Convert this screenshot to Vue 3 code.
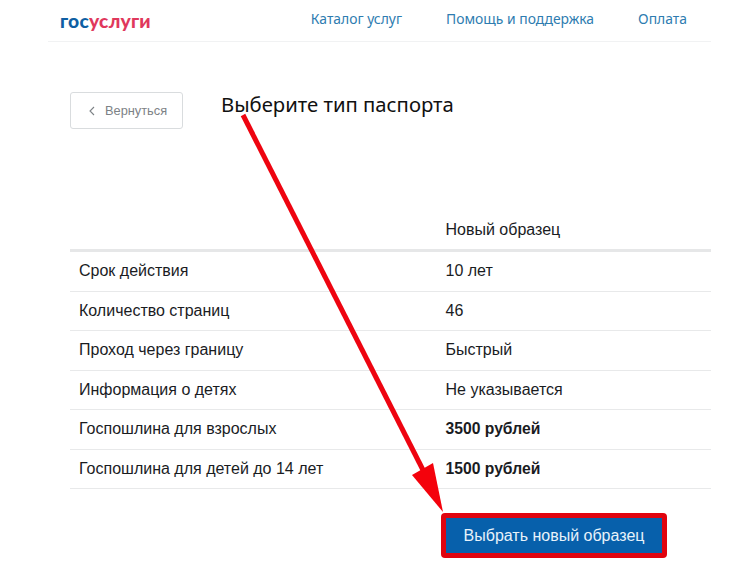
<template>
  <div class="page">
    <header class="top">
      <div class="logo"><span class="logo-blue">гос</span><span class="logo-red">услуги</span></div>
      <nav class="nav">
        <a v-for="link in links" :key="link" class="nav-link">{{ link }}</a>
      </nav>
    </header>

    <div class="title-row">
      <button class="back">
        <svg width="6" height="10" viewBox="0 0 6 10" class="back-icon">
          <path d="M5 1 L1 5 L5 9" fill="none" stroke="#7d8286" stroke-width="1.1" />
        </svg>
        Вернуться
      </button>
      <h1 class="title">Выберите тип паспорта</h1>
    </div>

    <div class="table">
      <div class="row head">
        <div class="cell-left"></div>
        <div class="cell-right">Новый образец</div>
      </div>
      <div v-for="row in rows" :key="row.label" class="row">
        <div class="cell-left">{{ row.label }}</div>
        <div class="cell-right" :class="{ bold: row.bold }">{{ row.value }}</div>
      </div>
    </div>

    <div class="actions">
      <div class="frame">
        <button class="choose">Выбрать новый образец</button>
      </div>
    </div>

    <!-- red annotation arrow over the page -->
    <svg class="arrow" width="749" height="570" viewBox="0 0 749 570">
      <line x1="243" y1="115" x2="423" y2="470" stroke="#ee0410" stroke-width="5" />
      <polygon points="443,512 412,475 433,463" fill="#f4020c" />
    </svg>
  </div>
</template>

<script setup>
const links = ['Каталог услуг', 'Помощь и поддержка', 'Оплата']

const rows = [
  { label: 'Срок действия', value: '10 лет' },
  { label: 'Количество страниц', value: '46' },
  { label: 'Проход через границу', value: 'Быстрый' },
  { label: 'Информация о детях', value: 'Не указывается' },
  { label: 'Госпошлина для взрослых', value: '3500 рублей', bold: true },
  { label: 'Госпошлина для детей до 14 лет', value: '1500 рублей', bold: true }
]
</script>

<style>
body {
  background: #fff;
  overflow: hidden;
}
</style>

<style scoped>
.page {
  position: relative;
  width: 749px;
  height: 570px;
  overflow: hidden;
  background: #fff;
  color: #1a1c1f;
  font-family: "Liberation Sans", Arial, sans-serif;
}

.top {
  display: flex;
  justify-content: space-between;
  align-items: center;
  height: 42px;
  margin: 0 38px 0 48px;
  padding: 0 24px 0 12px;
  border-bottom: 1px solid #f1f2f3;
  box-sizing: border-box;
}

.logo {
  font-family: Lato, "Liberation Sans", sans-serif;
  font-size: 19.3px;
  font-weight: 900;
  letter-spacing: 0.2px;
}

.logo-blue {
  color: #0f5fa3;
}

.logo-red {
  color: #e0385c;
}

.nav {
  display: flex;
  gap: 44px;
  margin-top: -4px;
}

.nav-link {
  color: #2e7cb0;
  font-size: 13.9px;
  font-family: "Noto Sans", sans-serif;
}

.title-row {
  display: flex;
  align-items: flex-start;
  margin: 50px 0 0 70px;
  height: 123px;
}

.back {
  display: flex;
  align-items: center;
  gap: 10px;
  width: 113px;
  height: 37px;
  padding: 0 0 0 18px;
  border: 1px solid #d9dcde;
  border-radius: 3px;
  background: #fff;
  color: #7d8286;
  font-family: "Liberation Sans", Arial, sans-serif;
  font-size: 12.8px;
  box-sizing: border-box;
}

.title {
  margin: -1px 0 0 38px;
  font-size: 20.3px;
  font-weight: 400;
  line-height: 26px;
  color: #111;
  font-family: "Noto Sans", sans-serif;
}

.table {
  margin: 0 38px 0 70px;
  font-size: 16px;
}

.row {
  display: grid;
  grid-template-columns: 366.5px 1fr;
  align-items: center;
  height: 39.5px;
  padding-left: 9px;
  border-bottom: 1px solid #e8e9ea;
  box-sizing: border-box;
}

.row.head {
  height: 37px;
  padding-bottom: 5px;
  border-bottom: 3px solid #e6e7e8;
}

.bold {
  font-weight: 700;
  font-size: 15.7px;
}

.actions {
  display: flex;
  margin: 24px 0 0 441px;
}

.frame {
  padding: 5px;
  background: #e0040f;
  border-radius: 4px;
}

.choose {
  display: block;
  width: 216px;
  height: 35px;
  border: none;
  background: #0760ab;
  color: #e8f2fa;
  font-family: "Liberation Sans", Arial, sans-serif;
  font-size: 16px;
}

.arrow {
  position: absolute;
  left: 0;
  top: 0;
  pointer-events: none;
}
</style>
